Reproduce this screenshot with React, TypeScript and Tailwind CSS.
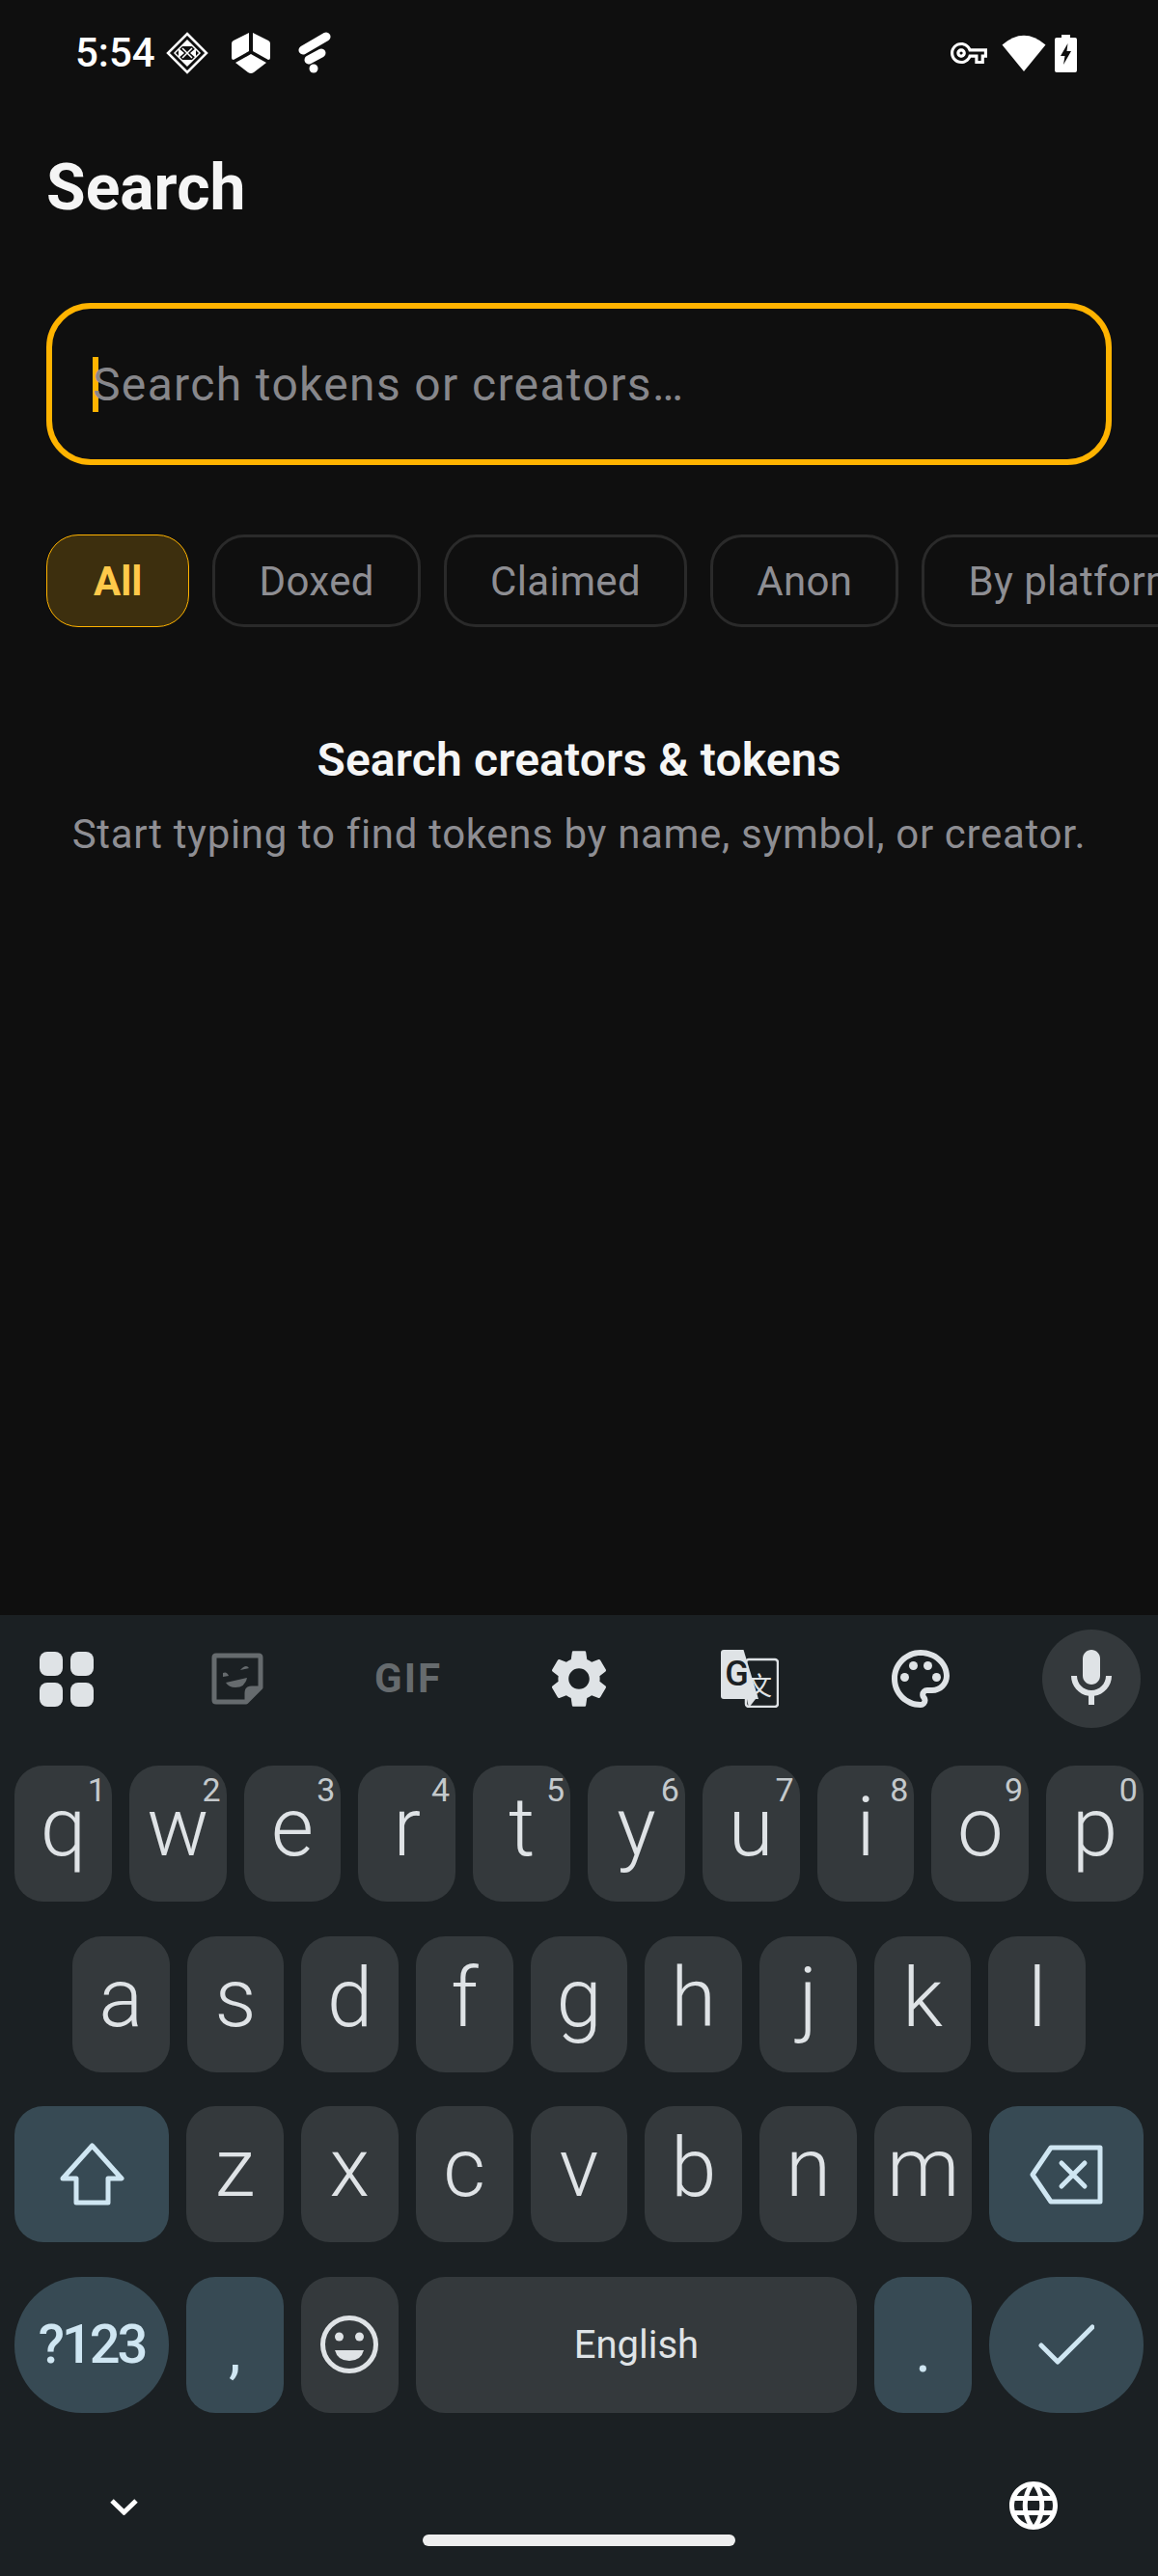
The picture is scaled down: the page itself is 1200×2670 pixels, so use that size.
import React from "react";

const Key = ({ l, d }: { l: string; d?: string }) => (
  <div className="relative flex-1 h-[141px] rounded-[30px] bg-[#34393c] flex justify-center">
    <span className="[font-family:Roboto,sans-serif] font-[350] text-[85px] leading-[85px] mt-[22px] text-[#dfe3e6]">{l}</span>
    {d && <span className="absolute top-[5px] right-[6px] [font-family:Roboto,sans-serif] text-[34px] leading-[40px] text-[#c4c9cc]">{d}</span>}
  </div>
);

const Chip = ({ t, on }: { t: string; on?: boolean }) => (
  <div className={on
    ? "shrink-0 h-[96px] px-[48px] flex items-center rounded-[33px] border-[1.5px] border-[#ffb300] bg-[#3d2f0e] text-[#ffc94a] font-bold text-[42px] [font-family:Roboto,sans-serif]"
    : "shrink-0 h-[96px] px-[45px] flex items-center rounded-[33px] border-[3px] border-[#2a2a2a] text-[#8e8e93] text-[42px] tracking-[0.4px] [font-family:Roboto,sans-serif]"}>{t}</div>
);

const Ico = ({ s, c, d }: { s: number; c: string; d: string }) => (
  <svg width={s} height={s} viewBox="0 0 24 24" fill={c}><path d={d} /></svg>
);

export default function App() {
  return (
    <div className="w-[1200px] h-[2670px] bg-[#0f0f0f] flex flex-col overflow-hidden [font-family:Roboto,sans-serif]">
      {/* status bar */}
      <div className="h-[110px] flex items-center justify-between pl-[78px] pr-[84px] text-white">
        <div className="flex items-center">
          <span className="text-[42px] font-medium leading-none">5:54</span>
          <svg width="44" height="44" viewBox="0 0 44 44" className="ml-[11px]" fill="none" stroke="#fff">
            <path d="M22 2 L42 22 L22 42 L2 22 Z" strokeWidth="2.5" />
            <path d="M22 9 L35 22 L22 35 L9 22 Z" strokeWidth="1.5" />
            <path d="M22 9 L28 15 H16 Z M22 35 L28 29 H16 Z" fill="#fff" stroke="none" />
            <path d="M13 17 L19 22 L13 27 Z M31 17 L25 22 L31 27 Z" fill="#fff" stroke="none" />
            <path d="M17 17 L22 22 L27 17 M17 27 L22 22 L27 27" strokeWidth="1.5" />
          </svg>
          <svg width="42" height="44" viewBox="0 0 42 44" className="ml-[23px]" fill="#fff">
            <path d="M19 1 V20 L3 29 Q1 29 1 27 V12 Q1 10 3 9 Z" />
            <path d="M23 1 V20 L39 29 Q41 29 41 27 V12 Q41 10 39 9 Z" />
            <path d="M21 23 L37 32 L24 42 Q21 44 18 42 L5 32 Z" />
          </svg>
          <svg width="34" height="44" viewBox="0 0 34 44" className="ml-[28px]" fill="none" stroke="#fff" strokeLinecap="round" strokeWidth="9">
            <path d="M5 19 L29 5" />
            <path d="M11 29 L24 22" />
            <circle cx="16" cy="38" r="4.5" fill="#fff" stroke="none" />
          </svg>
        </div>
        <div className="flex items-center">
          <Ico s={38} c="#fff" d="M22 19h-6v-4h-2.68c-1.14 2.42-3.6 4-6.32 4-3.86 0-7-3.14-7-7s3.14-7 7-7c2.72 0 5.17 1.58 6.32 4H24v6h-2v4zm-4-2h2v-4h2v-2H11.94l-.23-.67C11.01 8.34 9.11 7 7 7c-2.76 0-5 2.24-5 5s2.24 5 5 5c2.11 0 4.01-1.34 4.71-3.33l.23-.67H18v4zM7 15c-1.65 0-3-1.35-3-3s1.35-3 3-3 3 1.35 3 3-1.35 3-3 3zm0-4c-.55 0-1 .45-1 1s.45 1 1 1 1-.45 1-1-.45-1-1-1z" />
          <svg width="46" height="40" viewBox="0 0 46 40" fill="#fff" className="ml-[15px]">
            <path d="M0.5 11.5 Q23 -8 45.5 11.5 L23 39 Z" />
          </svg>
          <svg width="23" height="39" viewBox="0 0 23 39" className="ml-[9px]" fill="#fff">
            <path d="M7 0 H16 V3 H21 Q23 3 23 5 V37 Q23 39 21 39 H2 Q0 39 0 37 V5 Q0 3 2 3 H7 Z" />
            <path d="M13.5 9 L6 22 H10.5 L9 31 L17 17 H12.5 Z" fill="#0f0f0f" />
          </svg>
        </div>
      </div>

      {/* title */}
      <h1 className="ml-[48px] mt-[46px] text-[66px] leading-[78px] font-bold text-[#f5f5f5]">Search</h1>

      {/* input */}
      <div className="mx-[48px] mt-[80px] h-[168px] rounded-[46px] border-[6px] border-[#ffb300] flex items-center pl-[42px]">
        <div className="w-[6px] h-[57px] bg-[#ffb300] shrink-0"></div>
        <span className="-ml-[6px] mt-[2px] text-[48px] tracking-[1.35px] text-[#87878b]">Search tokens or creators…</span>
      </div>

      {/* chips */}
      <div className="mt-[72px] pl-[48px] flex gap-[24px] overflow-hidden">
        <Chip t="All" on />
        <Chip t="Doxed" />
        <Chip t="Claimed" />
        <Chip t="Anon" />
        <Chip t="By platform" />
      </div>

      {/* empty state */}
      <div className="mt-[106px] text-center">
        <div className="text-[48px] leading-[64px] font-semibold tracking-[0.15px] text-[#f5f5f5]">Search creators &amp; tokens</div>
        <div className="mt-[15px] text-[42px] leading-[60px] tracking-[0.67px] text-[#8e8e93]">Start typing to find tokens by name, symbol, or creator.</div>
      </div>

      {/* keyboard */}
      <div className="mt-auto h-[996px] bg-[#1b2023] flex flex-col">
        <div className="h-[156px] pt-[15px] pl-[18px] pr-[18px] flex justify-between items-start">
          <div className="w-[102px] h-[102px] flex items-center justify-center">
            <div className="grid grid-cols-2 gap-x-[8px] gap-y-[7px]">
              <div className="w-[24px] h-[25px] rounded-[8px] bg-[#dfe3e6]"></div>
              <div className="w-[24px] h-[25px] rounded-[8px] bg-[#dfe3e6]"></div>
              <div className="w-[24px] h-[25px] rounded-[8px] bg-[#dfe3e6]"></div>
              <div className="w-[24px] h-[25px] rounded-[8px] bg-[#dfe3e6]"></div>
            </div>
          </div>
          <div className="w-[102px] h-[102px] flex items-center justify-center">
            <svg width="54" height="54" viewBox="0 0 54 54" fill="none">
              <path d="M3 5 Q3 3 5 3 H49 Q51 3 51 5 V36 L36 51 H5 Q3 51 3 49 Z" stroke="#666b6e" strokeWidth="5" strokeLinejoin="round" />
              <path d="M36 51 V42 Q36 36 42 36 H51 Z" fill="#666b6e" stroke="#666b6e" strokeWidth="3" strokeLinejoin="round" />
              <path d="M12 21 Q16 19 18 24 L12 25 Z M30 18 Q36 11 39 16 Z" fill="#666b6e" />
              <path d="M15 31 L37 26 Q35 36 25 36 Q18 36 15 31 Z" fill="#666b6e" />
            </svg>
          </div>
          <div className="w-[102px] h-[102px] flex items-center justify-center">
            <span className="text-[42px] leading-none font-bold tracking-[2px] text-[#666b6e]">GIF</span>
          </div>
          <div className="w-[102px] h-[102px] flex items-center justify-center">
            <Ico s={72} c="#dfe3e6" d="M19.14 12.94c.04-.3.06-.61.06-.94 0-.32-.02-.64-.07-.94l2.03-1.58c.18-.14.23-.41.12-.61l-1.92-3.32c-.12-.22-.37-.29-.59-.22l-2.39.96c-.5-.38-1.03-.7-1.62-.94l-.36-2.54c-.04-.24-.24-.41-.48-.41h-3.84c-.24 0-.43.17-.47.41l-.36 2.54c-.59.24-1.13.57-1.62.94l-2.39-.96c-.22-.08-.47 0-.59.22L2.74 8.87c-.12.21-.08.47.12.61l2.03 1.58c-.05.3-.09.63-.09.94s.02.64.07.94l-2.03 1.58c-.18.14-.23.41-.12.61l1.92 3.32c.12.22.37.29.59.22l2.39-.96c.5.38 1.03.7 1.62.94l.36 2.54c.05.24.24.41.48.41h3.84c.24 0 .44-.17.47-.41l.36-2.54c.59-.24 1.13-.56 1.62-.94l2.39.96c.22.08.47 0 .59-.22l1.92-3.32c.12-.22.07-.47-.12-.61l-2.01-1.58zM12 15.6c-1.98 0-3.6-1.62-3.6-3.6s1.62-3.6 3.6-3.6 3.6 1.62 3.6 3.6-1.62 3.6-3.6 3.6z" />
          </div>
          <div className="w-[102px] h-[102px] flex items-center justify-center">
            <svg width="60" height="60" viewBox="0 0 60 60">
              <rect x="26" y="10" width="33" height="49" rx="3" fill="none" stroke="#dfe3e6" strokeWidth="2.5" />
              <text x="40" y="47" fontSize="26" textAnchor="middle" fill="#dfe3e6" fontFamily="'Noto Sans CJK SC',sans-serif">文</text>
              <path d="M3 0 H23.5 L39 51 H3 Q0 51 0 48 V3 Q0 0 3 0 Z" fill="#dfe3e6" />
              <path d="M27 51 H36 L29 60 Z" fill="#dfe3e6" />
              <text x="16.5" y="37" fontSize="36" fontWeight="500" textAnchor="middle" fill="#1b2023" fontFamily="Roboto,sans-serif">G</text>
            </svg>
          </div>
          <div className="w-[102px] h-[102px] flex items-center justify-center">
            <svg width="72" height="72" viewBox="0 0 24 24" fill="#dfe3e6">
              <path d="M12 22C6.49 22 2 17.51 2 12S6.49 2 12 2s10 4.04 10 9c0 3.31-2.69 6-6 6h-1.77c-.28 0-.5.22-.5.5 0 .12.05.23.13.33.41.47.64 1.06.64 1.67A2.5 2.5 0 0 1 12 22zm0-18c-4.41 0-8 3.59-8 8s3.59 8 8 8c.28 0 .5-.22.5-.5a.54.54 0 0 0-.14-.35c-.41-.46-.63-1.05-.63-1.65a2.5 2.5 0 0 1 2.5-2.5H16c2.21 0 4-1.79 4-4 0-3.86-3.59-7-8-7z" />
              <circle cx="6.5" cy="11.5" r="1.5" /><circle cx="9.5" cy="7.5" r="1.5" /><circle cx="14.5" cy="7.5" r="1.5" /><circle cx="17.5" cy="11.5" r="1.5" />
            </svg>
          </div>
          <div className="w-[102px] h-[102px] rounded-full bg-[#34393c] flex items-center justify-center">
            <svg width="72" height="72" viewBox="0 0 24 24" fill="#dfe3e6">
              <path d="M12 14c1.66 0 3-1.34 3-3V5c0-1.66-1.34-3-3-3S9 3.34 9 5v6c0 1.66 1.34 3 3 3z" />
              <path d="M17 11c0 2.76-2.24 5-5 5s-5-2.24-5-5H5c0 3.53 2.61 6.43 6 6.92V21h2v-3.08c3.39-.49 6-3.39 6-6.92h-2z" />
            </svg>
          </div>
        </div>

        <div className="px-[15px] flex flex-col gap-[35.67px]">
          <div className="flex gap-[18px]">
            {"qwertyuiop".split("").map((l, i) => <Key key={l} l={l} d={"1234567890"[i]} />)}
          </div>
          <div className="flex gap-[18px] px-[60px]">
            {"asdfghjkl".split("").map((l) => <Key key={l} l={l} />)}
          </div>
          <div className="flex gap-[18px]">
            <div className="w-[160px] h-[141px] rounded-[30px] bg-[#374a54] flex items-center justify-center">
              <svg width="67" height="65" viewBox="0 0 67 65" fill="none" stroke="#cfe6f2" strokeWidth="5" strokeLinejoin="round">
                <path d="M33.5 3 L64 37 H50 V62 H17 V37 H3 Z" />
              </svg>
            </div>
            {"zxcvbnm".split("").map((l) => <Key key={l} l={l} />)}
            <div className="w-[160px] h-[141px] rounded-[30px] bg-[#374a54] flex items-center justify-center">
              <svg width="76" height="62" viewBox="0 0 76 62" fill="none" stroke="#cfe6f2" strokeWidth="5" strokeLinejoin="round" strokeLinecap="round">
                <path d="M22 3 H73 V59 H22 L3 31 Z" />
                <path d="M33 19 L57 43 M57 19 L33 43" />
              </svg>
            </div>
          </div>
          <div className="flex gap-[18px]">
            <div className="w-[160px] h-[141px] rounded-[70px] bg-[#374a54] flex items-center justify-center text-[56px] font-medium tracking-[-3px] text-[#cfe6f2]">?123</div>
            <div className="w-[100.8px] h-[141px] rounded-[30px] bg-[#374a54] flex justify-center text-[64px] leading-[64px] pt-[45px] text-[#cfe6f2]">,</div>
            <div className="w-[100.8px] h-[141px] rounded-[30px] bg-[#34393c] flex items-center justify-center">
              <svg width="60" height="60" viewBox="0 0 60 60" fill="#dfe3e6">
                <circle cx="30" cy="30" r="27.5" fill="none" stroke="#dfe3e6" strokeWidth="5" />
                <circle cx="19.5" cy="22" r="4.5" /><circle cx="40.5" cy="22" r="4.5" />
                <path d="M15 36 H45 Q42 47 30 47 Q18 47 15 36 Z" />
              </svg>
            </div>
            <div className="flex-1 h-[141px] pt-[2px] rounded-[30px] bg-[#34393c] flex items-center justify-center text-[40px] text-[#dfe3e6]">English</div>
            <div className="w-[100.8px] h-[141px] rounded-[30px] bg-[#374a54] flex justify-center text-[64px] leading-[64px] pt-[45px] text-[#cfe6f2]">.</div>
            <div className="w-[160px] h-[141px] rounded-[70px] bg-[#374a54] flex items-center justify-center">
              <svg width="58" height="42" viewBox="0 0 58 42" fill="none" stroke="#cfe6f2" strokeWidth="5" strokeLinecap="round" strokeLinejoin="round">
                <path d="M3 22 L20 39 L56 3" />
              </svg>
            </div>
          </div>
        </div>

        <div className="flex-1 grid grid-cols-[1fr_324px_1fr]">
          <div className="pl-[114px] pt-[88px]">
            <svg width="29" height="18" viewBox="0 0 29 18" fill="none" stroke="#fff" strokeWidth="5">
              <path d="M2 3 L14.5 15 L27 3" />
            </svg>
          </div>
          <div className="pt-[126px]">
            <div className="h-[12px] rounded-full bg-[#eeeeee]"></div>
          </div>
          <div className="flex justify-end pr-[99px] pt-[66px]">
            <Ico s={60} c="#fff" d="M11.99 2C6.47 2 2 6.48 2 12s4.47 10 9.99 10C17.52 22 22 17.52 22 12S17.52 2 11.99 2zm6.93 6h-2.95c-.32-1.25-.78-2.45-1.38-3.56 1.84.63 3.37 1.91 4.33 3.56zM12 4.04c.83 1.2 1.48 2.53 1.91 3.96h-3.82c.43-1.43 1.08-2.76 1.91-3.96zM4.26 14C4.1 13.36 4 12.69 4 12s.1-1.36.26-2h3.38c-.08.66-.14 1.32-.14 2 0 .68.06 1.34.14 2H4.26zm.82 2h2.95c.32 1.25.78 2.45 1.38 3.56-1.84-.63-3.37-1.9-4.33-3.56zm2.95-8H5.08c.96-1.66 2.49-2.93 4.33-3.56C8.81 5.55 8.35 6.75 8.03 8zM12 19.96c-.83-1.2-1.48-2.53-1.91-3.96h3.82c-.43 1.43-1.08 2.76-1.91 3.96zM14.34 14H9.66c-.09-.66-.16-1.32-.16-2 0-.68.07-1.35.16-2h4.68c.09.65.16 1.32.16 2 0 .68-.07 1.34-.16 2zm.25 5.56c.6-1.11 1.06-2.31 1.38-3.56h2.95c-.96 1.65-2.49 2.93-4.33 3.56zM16.36 14c.08-.66.14-1.32.14-2 0-.68-.06-1.34-.14-2h3.38c.16.64.26 1.31.26 2s-.1 1.36-.26 2h-3.38z" />
          </div>
        </div>
      </div>
    </div>
  );
}
